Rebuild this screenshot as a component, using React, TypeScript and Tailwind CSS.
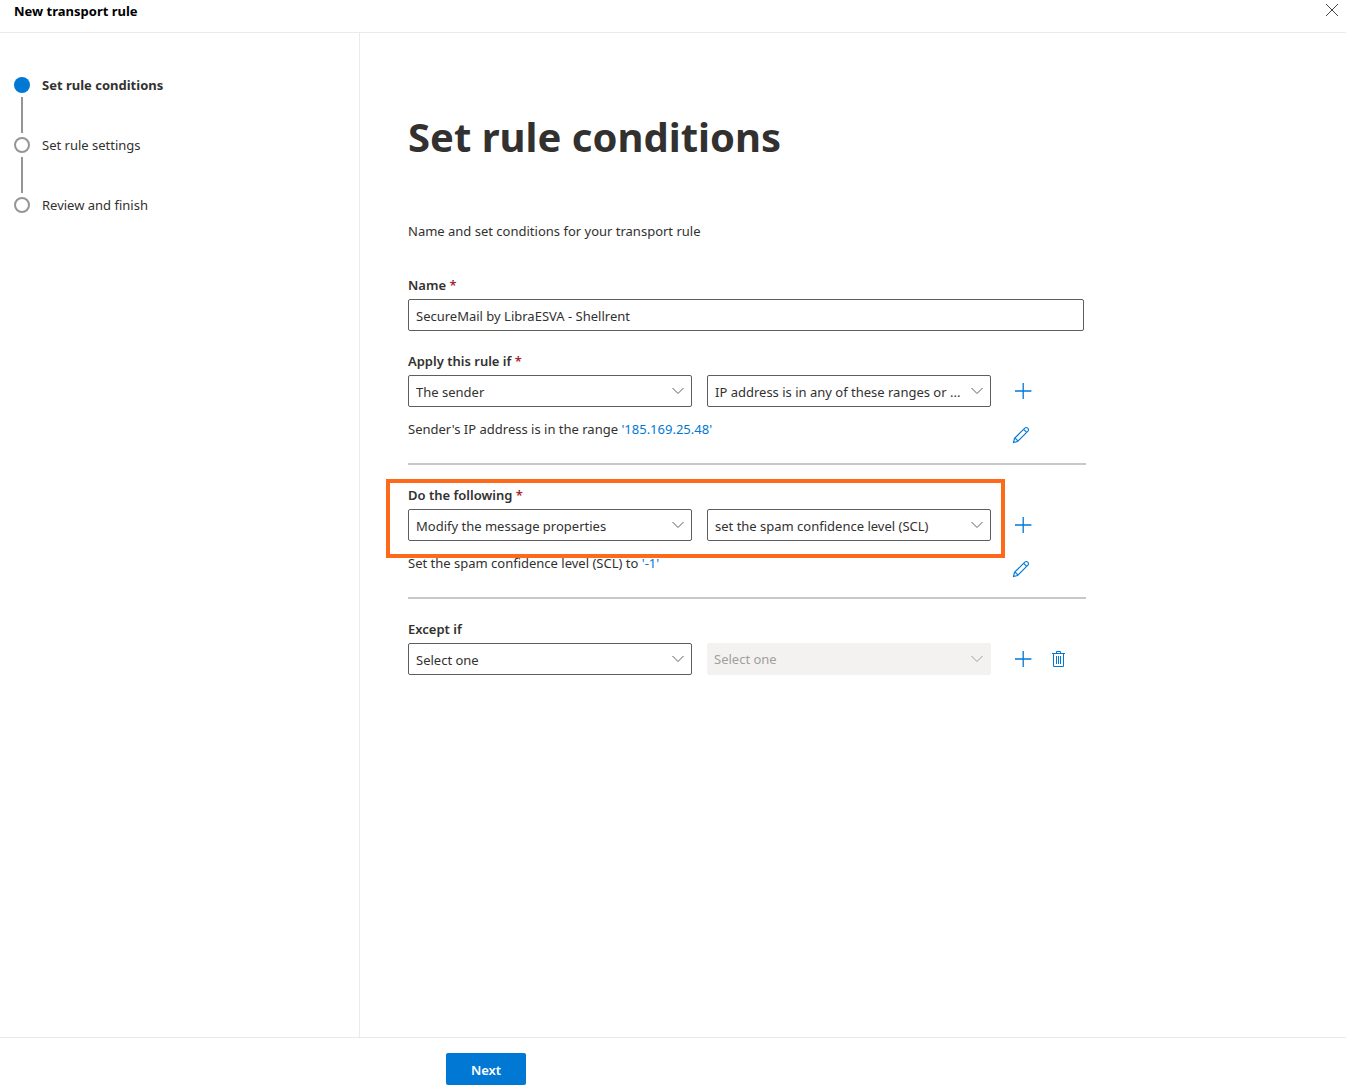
import React, { useState } from "react";

const steps = [
  { title: "Set rule conditions", current: true },
  { title: "Set rule settings", current: false },
  { title: "Review and finish", current: false },
];

function CloseIcon() {
  return (
    <svg width="14" height="14" viewBox="0 0 14 14" fill="none" stroke="#444" strokeWidth="1">
      <path d="M1 1l12 12M13 1L1 13" />
    </svg>
  );
}

function PlusIcon() {
  return (
    <svg width="18" height="18" viewBox="0 0 18 18" fill="none" stroke="#0078d4" strokeWidth="1.3">
      <path d="M9.2 1v16M1 9h16.4" />
    </svg>
  );
}

function PencilIcon() {
  return (
    <svg width="18" height="18" viewBox="0 0 18 18" fill="none" stroke="#0078d4" strokeWidth="1.1">
      <path d="M1.500 16.500l1-4.100L12.800 2.100a2.200 2.200 0 013.100 3.100L5.600 15.500z" />
      <path d="M11.600 3.300l3.100 3.100M2.500 12.400c1.600.2 2.900 1.500 3.100 3.100" />
    </svg>
  );
}

function TrashIcon() {
  return (
    <svg width="14" height="18" viewBox="0 0 14 18" fill="none" stroke="#0078d4" strokeWidth="1">
      <path d="M0 3.500h13M4.500 3.500v-2h4v2M1.500 3.500v13h10v-13M4.500 6v8M6.500 6v8M8.500 6v8" />
    </svg>
  );
}

function Label({
  htmlFor,
  required,
  children,
}: {
  htmlFor: string;
  required?: boolean;
  children: React.ReactNode;
}) {
  return (
    <label htmlFor={htmlFor} className="block mb-1 font-semibold">
      {children}
      {required && <span className="text-[#a4262c]"> *</span>}
    </label>
  );
}

function Select({
  id,
  label,
  value,
  disabled,
}: {
  id: string;
  label?: string;
  value: string;
  disabled?: boolean;
}) {
  return (
    <div className="relative flex-1">
      <select
        id={id}
        aria-label={label}
        disabled={disabled}
        defaultValue={value}
        className="appearance-none w-full h-8 pl-[7px] pr-6 pt-[2px] rounded-[2px] border border-[#605e5c] bg-white opacity-100 disabled:pt-0 disabled:pl-[6px] disabled:border-[#f3f2f1] disabled:bg-[#f3f2f1] disabled:text-[#a19f9d]"
      >
        <option>{value}</option>
      </select>
      <svg
        className="absolute right-2 top-3 pointer-events-none"
        width="12"
        height="8"
        viewBox="0 0 12 8"
        fill="none"
        stroke={disabled ? "#a19f9d" : "#605e5c"}
      >
        <path d="M.5 1l5.500 5.500L11.500 1" />
      </svg>
    </div>
  );
}

function IconButton({ label, children }: { label: string; children: React.ReactNode }) {
  return (
    <button type="button" aria-label={label} className="size-8 flex items-center justify-center">
      {children}
    </button>
  );
}

function RuleRow({
  id,
  label,
  required,
  first,
  second,
  secondDisabled,
  highlighted,
  removable,
  summary,
  summaryValue,
}: {
  id: string;
  label: string;
  required?: boolean;
  first: string;
  second: string;
  secondDisabled?: boolean;
  highlighted?: boolean;
  removable?: boolean;
  summary?: string;
  summaryValue?: string;
}) {
  return (
    <section className="mt-5">
      <div className="flex items-end">
        <div className="relative w-[583px]">
          <Label htmlFor={id} required={required}>
            {label}
          </Label>
          <div className="flex gap-[15px]">
            <Select id={id} value={first} />
            <Select id={`${id}-detail`} label={`${label} detail`} value={second} disabled={secondDisabled} />
          </div>
          {highlighted && (
            <div className="absolute -top-[6px] -left-[22px] -right-[14px] -bottom-[17px] border-4 border-[#ff6a1a] pointer-events-none" />
          )}
        </div>
        <div className="ml-4 flex gap-1">
          <IconButton label="Add">
            <PlusIcon />
          </IconButton>
          {removable && (
            <IconButton label="Remove">
              <TrashIcon />
            </IconButton>
          )}
        </div>
      </div>
      {summary && (
        <>
          <div className="mt-3 flex">
            <p className="w-[583px]">
              {summary}{" "}
              <a href="#" className="text-[#0078d4]">
                {summaryValue}
              </a>
            </p>
            <div className="ml-[14px]">
              <IconButton label="Edit">
                <PencilIcon />
              </IconButton>
            </div>
          </div>
          <hr className="mt-3 border-t-2 border-[#c8c8c8]" />
        </>
      )}
    </section>
  );
}

export default function App() {
  const [name, setName] = useState("SecureMail by LibraESVA - Shellrent");

  return (
    <div className="min-h-screen flex flex-col bg-white font-['Noto_Sans','Open_Sans',sans-serif] text-[13px] leading-5 text-[#323130]">
      <header className="h-[33px] shrink-0 flex items-start justify-between border-b border-[#eaeaea] pl-[14px] pr-[7px]">
        <h2 className="pt-px font-bold text-black">New transport rule</h2>
        <button type="button" aria-label="Close" className="pt-[3px]">
          <CloseIcon />
        </button>
      </header>

      <div className="flex-1 flex">
        <nav className="w-[360px] shrink-0 border-r border-[#eaeaea] pl-[14px] pt-[42px]">
          <ol>
            {steps.map((step, index) => (
              <li key={step.title} className="flex gap-3 h-[60px]">
                <div className="w-4 flex flex-col items-center pt-[2px]">
                  <span
                    className={
                      step.current
                        ? "size-4 rounded-full bg-[#0078d4]"
                        : "size-4 rounded-full border-2 border-[#979593]"
                    }
                  />
                  {index < steps.length - 1 && <span className="mt-1 w-[2px] h-9 bg-[#979593]" />}
                </div>
                <span className={step.current ? "font-bold" : ""}>{step.title}</span>
              </li>
            ))}
          </ol>
        </nav>

        <main className="flex-1 pl-12 pt-[76px]">
          <form className="max-w-[678px]" onSubmit={(event) => event.preventDefault()}>
            <h1 className="text-[40px] leading-[56px] font-bold">Set rule conditions</h1>
            <p className="mt-14 mb-[34px]">Name and set conditions for your transport rule</p>

            <div className="pr-[2px]">
              <Label htmlFor="name" required>
                Name
              </Label>
              <input
                id="name"
                type="text"
                value={name}
                onChange={(event) => setName(event.target.value)}
                className="block w-full h-8 px-[7px] pt-[2px] rounded-[2px] border border-[#605e5c]"
              />
            </div>

            <RuleRow
              id="apply-if"
              label="Apply this rule if"
              required
              first="The sender"
              second="IP address is in any of these ranges or ..."
              summary="Sender's IP address is in the range"
              summaryValue="'185.169.25.48'"
            />
            <RuleRow
              id="do-following"
              label="Do the following"
              required
              highlighted
              first="Modify the message properties"
              second="set the spam confidence level (SCL)"
              summary="Set the spam confidence level (SCL) to"
              summaryValue="'-1'"
            />
            <RuleRow
              id="except-if"
              label="Except if"
              removable
              first="Select one"
              second="Select one"
              secondDisabled
            />
          </form>
        </main>
      </div>

      <footer className="h-[54px] shrink-0 border-t border-[#eaeaea] pl-[446px] pt-[15px]">
        <button type="button" className="block w-20 h-8 pt-[2px] rounded-[2px] bg-[#0078d4] font-semibold text-white">
          Next
        </button>
      </footer>
    </div>
  );
}
